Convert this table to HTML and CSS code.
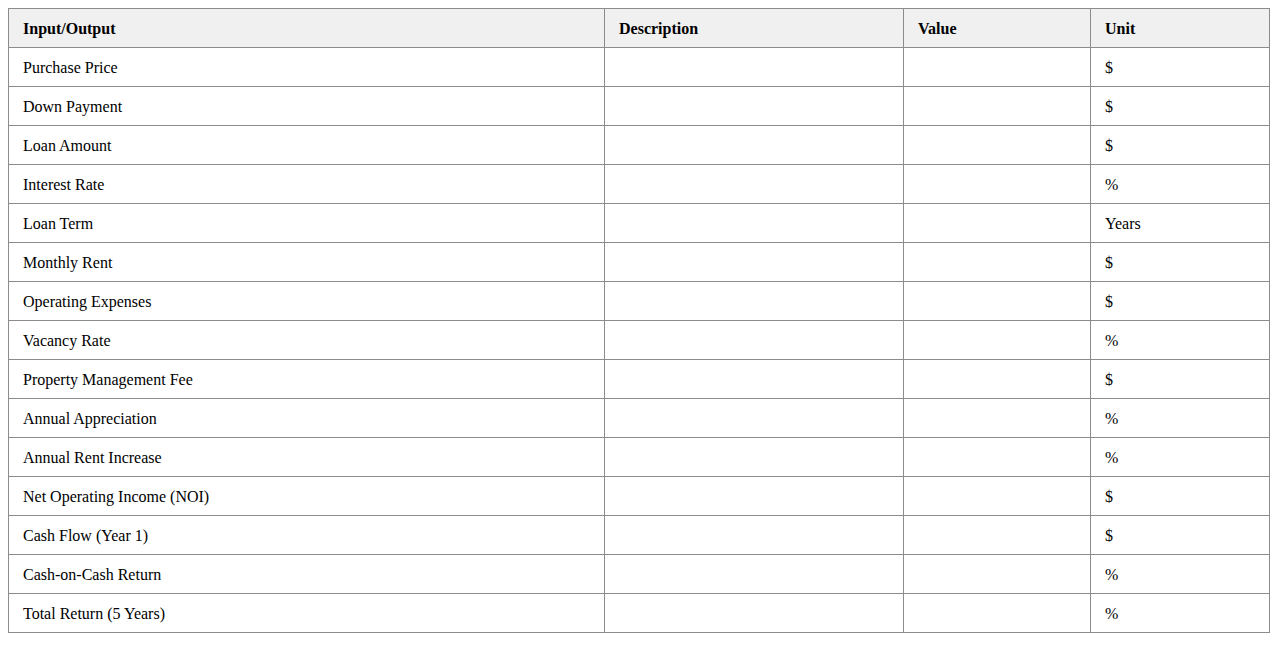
FILE: index.html
```html
<!DOCTYPE html>
<html>
<head>
<meta charset="utf-8">
<link rel="stylesheet" href="styles.css">
</head>
<body>
<table class="calc">
<colgroup>
<col class="c1"><col class="c2"><col class="c3"><col class="c4">
</colgroup>
<thead>
<tr><th>Input/Output</th><th>Description</th><th>Value</th><th>Unit</th></tr>
</thead>
<tbody>
<tr><td>Purchase Price</td><td></td><td></td><td>$</td></tr>
<tr><td>Down Payment</td><td></td><td></td><td>$</td></tr>
<tr><td>Loan Amount</td><td></td><td></td><td>$</td></tr>
<tr><td>Interest Rate</td><td></td><td></td><td>%</td></tr>
<tr><td>Loan Term</td><td></td><td></td><td>Years</td></tr>
<tr><td>Monthly Rent</td><td></td><td></td><td>$</td></tr>
<tr><td>Operating Expenses</td><td></td><td></td><td>$</td></tr>
<tr><td>Vacancy Rate</td><td></td><td></td><td>%</td></tr>
<tr><td>Property Management Fee</td><td></td><td></td><td>$</td></tr>
<tr><td>Annual Appreciation</td><td></td><td></td><td>%</td></tr>
<tr><td>Annual Rent Increase</td><td></td><td></td><td>%</td></tr>
<tr><td>Net Operating Income (NOI)</td><td></td><td></td><td>$</td></tr>
<tr><td>Cash Flow (Year 1)</td><td></td><td></td><td>$</td></tr>
<tr><td>Cash-on-Cash Return</td><td></td><td></td><td>%</td></tr>
<tr><td>Total Return (5 Years)</td><td></td><td></td><td>%</td></tr>
</tbody>
</table>
</body>
</html>
```
FILE: styles.css
```css
body {
  margin: 8px;
  font-family: "Liberation Serif", "Times New Roman", serif;
  font-size: 16px;
  color: #000;
  background: #fff;
}
.calc {
  width: 1261px;
  border-collapse: collapse;
  table-layout: fixed;
}
.c1 { width: 596px; }
.c2 { width: 299px; }
.c3 { width: 187px; }
.c4 { width: 179px; }
.calc th,
.calc td {
  border: 1px solid #8c8c8c;
  padding: 11px 14px 9px;
  text-align: left;
  height: 18px;
  line-height: 18px;
}
.calc th {
  background: #f0f0f0;
  font-weight: bold;
}
```
